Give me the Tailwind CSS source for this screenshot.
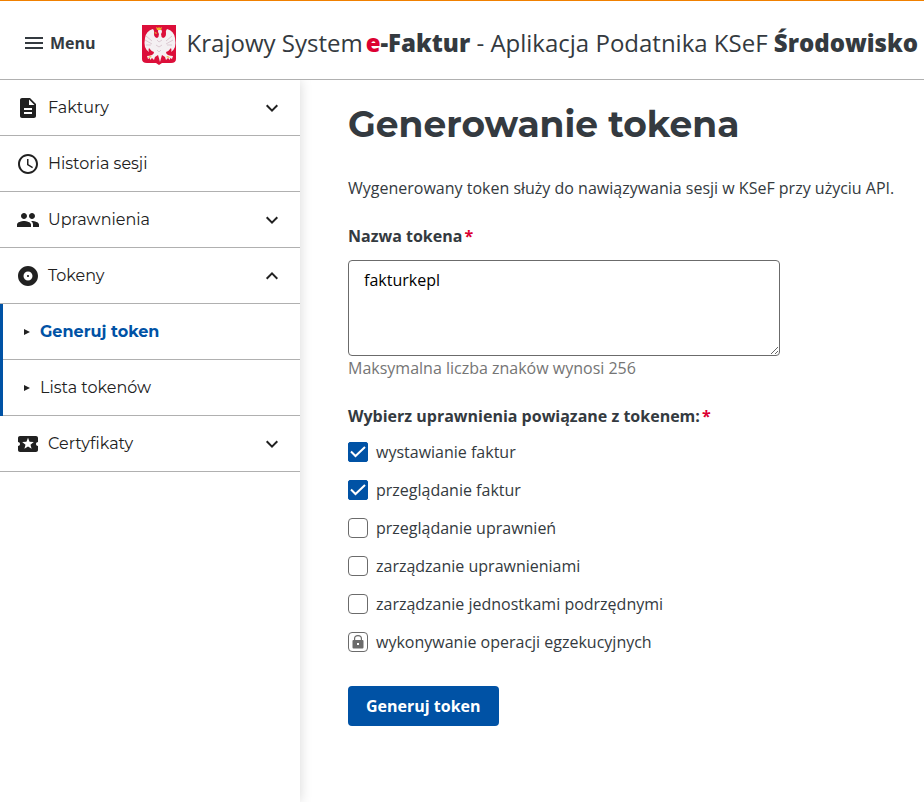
<!doctype html>
<html lang="pl">

<head>
    <meta charset="UTF-8">
    <meta name="viewport" content="width=device-width, initial-scale=1.0">
    <title>Generowanie tokena</title>
    <script src="https://cdn.jsdelivr.net/npm/@tailwindcss/browser@4"></script>
</head>

<body class="flex min-h-screen flex-col overflow-x-hidden bg-white font-['Open_Sans',sans-serif] text-base text-[#343a40]">
    <header class="flex h-20 items-center overflow-hidden border-t border-b border-t-[#f08000] border-b-[#b0b0b0] pt-1.5 pl-6">
        <button type="button" class="mr-[45px] flex shrink-0 items-center gap-1.5 font-bold">
            <svg class="h-5 w-5" viewBox="0 0 20 20" fill="none" stroke="currentColor" stroke-width="2">
                <path d="M1 5h18M1 10h18M1 15h18" />
            </svg>
            Menu
        </button>
        <a href="#" class="flex shrink-0 items-center gap-2.5 text-2xl whitespace-nowrap">
            <svg class="h-11 w-9" viewBox="0 -1 36 44">
                <path d="M1 3h34v34q0 4-5 4h-9l-3 2-3-2H6q-5 0-5-4z" fill="#dc0f3a" />
                <path fill="#f4f0f2"
                    d="M17 7q3-1 4 2 0 2-1 3 0 3 2 4 3-1 3-4-1-3 1-5 7 2 8 9 1 5 0 9-1 3-4 5 1-2 0-4-2 3-5 4 0 2 2 3 3 1 5 1l-1 3-2-1 0 2-2-2-2 2-1-3-3-2q-1 3-2 7-1-4-2-7l-3 2-1 3-2-2-2 2 0-2-2 1-1-3q2 0 5-1 2-1 2-3-3-1-5-4-1 2 0 4-3-2-4-5-1-4 0-9 1-7 8-9 2 2 1 5 0 3 3 4 2-1 2-4-2-3 0-5z" />
                <path d="M5 14l6 5M4 18l7 4M5 23l5 0M31 14l-6 5M32 18l-7 4M31 23l-5 0M16 18l2 2 3-2M15 23l3 2 3-2M16 28l2 2 2-2" fill="none" stroke="#dccad2" stroke-width="1" />
                <path d="M16 8l-1-3 2 1 1-1 1 1 2-1-1 3zM15 10l-2 1 3 1zM9 34l-2 2 4-1zM27 34l2 2-4-1z" fill="#edb52c" />
            </svg>
            <span>Krajowy System<b class="ml-[3px] font-extrabold"><span class="text-[#dc0032]">e</span>-Faktur</b> - Aplikacja Podatnika KSeF <b class="font-extrabold">Środowisko</b></span>
        </a>
    </header>

    <div class="flex flex-1">
        <nav class="w-75 shrink-0 font-[Montserrat,Inter,sans-serif] text-[#212121] shadow-[0_0_12px_rgba(0,0,0,0.16)] [clip-path:inset(0_-16px_0_0)]">
            <ul>
                <li class="border-b border-[#b0b0b0]">
                    <button type="button" class="flex h-[55px] w-full items-center gap-2 px-4">
                        <svg class="h-6 w-6" viewBox="0 0 24 24" fill="currentColor">
                            <path d="M14 2H6c-1.100 0-2 .9-2 2v16c0 1.100.9 2 2 2h12c1.100 0 2-.9 2-2V8l-6-6zm2 16H8v-2h8v2zm0-4H8v-2h8v2zm-3-5V3.500L18.500 9H13z" />
                        </svg>
                        <span class="flex-1 text-left">Faktury</span>
                        <svg class="h-6 w-6" viewBox="0 0 24 24" fill="none" stroke="currentColor" stroke-width="2">
                            <path d="M6.700 9.300l5.300 5.300 5.300-5.300" />
                        </svg>
                    </button>
                </li>
                <li class="border-b border-[#b0b0b0]">
                    <a href="#" class="flex h-[55px] items-center gap-2 px-4">
                        <svg class="h-6 w-6" viewBox="0 0 24 24" fill="currentColor">
                            <path d="M11.990 2C6.470 2 2 6.480 2 12s4.470 10 9.990 10C17.520 22 22 17.520 22 12S17.520 2 11.990 2zM12 20c-4.420 0-8-3.580-8-8s3.580-8 8-8 8 3.580 8 8-3.580 8-8 8zm.5-13H11v6l5.250 3.150.75-1.230-4.500-2.670z" />
                        </svg>
                        <span>Historia sesji</span>
                    </a>
                </li>
                <li class="border-b border-[#b0b0b0]">
                    <button type="button" class="flex h-[55px] w-full items-center gap-2 px-4">
                        <svg class="h-6 w-6" viewBox="0 0 24 24" fill="currentColor">
                            <path d="M16 11c1.660 0 2.990-1.340 2.990-3S17.660 5 16 5c-1.660 0-3 1.340-3 3s1.340 3 3 3zm-8 0c1.660 0 2.990-1.340 2.990-3S9.660 5 8 5C6.340 5 5 6.340 5 8s1.340 3 3 3zm0 2c-2.330 0-7 1.170-7 3.500V19h14v-2.500c0-2.330-4.670-3.500-7-3.500zm8 0c-.29 0-.62.02-.97.05 1.160.84 1.970 1.970 1.970 3.450V19h6v-2.500c0-2.330-4.670-3.500-7-3.500z" />
                        </svg>
                        <span class="flex-1 text-left">Uprawnienia</span>
                        <svg class="h-6 w-6" viewBox="0 0 24 24" fill="none" stroke="currentColor" stroke-width="2">
                            <path d="M6.700 9.300l5.300 5.300 5.300-5.300" />
                        </svg>
                    </button>
                </li>
                <li>
                    <button type="button" class="flex h-14 w-full items-center gap-2 border-b border-[#b0b0b0] px-4" aria-expanded="true">
                        <svg class="h-6 w-6" viewBox="0 0 24 24" fill="currentColor">
                            <path d="M12 2C6.480 2 2 6.480 2 12s4.480 10 10 10 10-4.480 10-10S17.520 2 12 2zm0 14.500c-2.490 0-4.500-2.010-4.500-4.500S9.510 7.500 12 7.500s4.500 2.010 4.500 4.500-2.010 4.500-4.500 4.500zm0-5.500c-.55 0-1 .45-1 1s.45 1 1 1 1-.45 1-1-.45-1-1-1z" />
                        </svg>
                        <span class="flex-1 text-left">Tokeny</span>
                        <svg class="h-6 w-6" viewBox="0 0 24 24" fill="none" stroke="currentColor" stroke-width="2">
                            <path d="M6.700 14.700l5.300-5.300 5.300 5.300" />
                        </svg>
                    </button>
                    <ul class="border-l-3 border-[#0052a5]">
                        <li class="border-b border-[#b0b0b0]">
                            <a href="#" class="flex h-[55px] items-center gap-[9px] pl-5 font-bold text-[#0052a5]">
                                <svg class="h-2 w-2 text-[#212121]" viewBox="0 0 8 8" fill="currentColor">
                                    <path d="M1 1l6 3-6 3z" />
                                </svg>
                                Generuj token
                            </a>
                        </li>
                        <li class="border-b border-[#b0b0b0]">
                            <a href="#" class="flex h-[55px] items-center gap-[9px] pl-5">
                                <svg class="h-2 w-2" viewBox="0 0 8 8" fill="currentColor">
                                    <path d="M1 1l6 3-6 3z" />
                                </svg>
                                Lista tokenów
                            </a>
                        </li>
                    </ul>
                </li>
                <li class="border-b border-[#b0b0b0]">
                    <button type="button" class="flex h-[55px] w-full items-center gap-2 px-4">
                        <svg class="h-6 w-6" viewBox="0 0 24 24" fill="currentColor">
                            <path d="M20 12c0-1.100.9-2 2-2V6c0-1.100-.9-2-2-2H4c-1.100 0-1.990.9-1.990 2v4c1.100 0 1.990.9 1.990 2s-.89 2-2 2v4c0 1.100.9 2 2 2h16c1.100 0 2-.9 2-2v-4c-1.100 0-2-.9-2-2zm-4.420 4.800L12 14.500l-3.580 2.300 1.080-4.120-3.290-2.690 4.240-.25L12 5.800l1.540 3.950 4.240.25-3.290 2.690 1.090 4.110z" />
                        </svg>
                        <span class="flex-1 text-left">Certyfikaty</span>
                        <svg class="h-6 w-6" viewBox="0 0 24 24" fill="none" stroke="currentColor" stroke-width="2">
                            <path d="M6.700 9.300l5.300 5.300 5.300-5.300" />
                        </svg>
                    </button>
                </li>
            </ul>
        </nav>

        <main class="min-w-0 flex-1 px-6 pt-5 pb-8 pl-12">
            <h1 class="font-[Montserrat,Inter,sans-serif] text-4xl leading-12 font-bold">Generowanie tokena</h1>
            <p class="mt-7">Wygenerowany token służy do nawiązywania sesji w KSeF przy użyciu API.</p>

            <form class="mt-6">
                <label for="token_name" class="block font-bold">Nazwa tokena<span class="ml-0.5 text-[#dc0032]">*</span></label>
                <textarea name="token_name" id="token_name" maxlength="256"
                    class="mt-3 block h-24 w-full max-w-108 rounded-sm border border-[#6b6b6b] px-[15px] py-[7px] text-black">fakturkepl</textarea>
                <p class="text-[#757575]">Maksymalna liczba znaków wynosi 256</p>

                <fieldset class="mt-6">
                    <legend class="font-bold">Wybierz uprawnienia powiązane z tokenem:<span class="ml-0.5 text-[#dc0032]">*</span></legend>
                    <div class="mt-3 flex flex-col gap-3.5">
                        <label class="flex items-center gap-2">
                            <span class="grid h-5 w-5">
                                <input type="checkbox" checked class="peer col-start-1 row-start-1 h-5 w-5 appearance-none rounded-sm border border-[#6b6b6b] checked:rounded-xs checked:border-[#0052a5] checked:bg-[#0052a5]">
                                <svg class="pointer-events-none col-start-1 row-start-1 hidden h-5 w-5 peer-checked:block" viewBox="0 0 20 20" fill="none" stroke="white" stroke-width="2">
                                    <path d="M3 9.500l4.500 4.500L17 5" />
                                </svg>
                            </span>
                            wystawianie faktur
                        </label>
                        <label class="flex items-center gap-2">
                            <span class="grid h-5 w-5">
                                <input type="checkbox" checked class="peer col-start-1 row-start-1 h-5 w-5 appearance-none rounded-sm border border-[#6b6b6b] checked:rounded-xs checked:border-[#0052a5] checked:bg-[#0052a5]">
                                <svg class="pointer-events-none col-start-1 row-start-1 hidden h-5 w-5 peer-checked:block" viewBox="0 0 20 20" fill="none" stroke="white" stroke-width="2">
                                    <path d="M3 9.500l4.500 4.500L17 5" />
                                </svg>
                            </span>
                            przeglądanie faktur
                        </label>
                        <label class="flex items-center gap-2">
                            <input type="checkbox" class="h-5 w-5 appearance-none rounded-sm border border-[#6b6b6b] checked:bg-[#0052a5]">
                            przeglądanie uprawnień
                        </label>
                        <label class="flex items-center gap-2">
                            <input type="checkbox" class="h-5 w-5 appearance-none rounded-sm border border-[#6b6b6b] checked:bg-[#0052a5]">
                            zarządzanie uprawnieniami
                        </label>
                        <label class="flex items-center gap-2">
                            <input type="checkbox" class="h-5 w-5 appearance-none rounded-sm border border-[#6b6b6b] checked:bg-[#0052a5]">
                            zarządzanie jednostkami podrzędnymi
                        </label>
                        <label class="flex items-center gap-2">
                            <span class="grid h-5 w-5">
                                <input type="checkbox" disabled class="col-start-1 row-start-1 h-5 w-5 appearance-none rounded-sm border border-[#6b6b6b]">
                                <svg class="pointer-events-none col-start-1 row-start-1 h-5 w-5 text-[#6b6b6b]" viewBox="0 0 20 20" fill="currentColor">
                                    <path fill-rule="evenodd" d="M6 8V6.500a4 3.500 0 0 1 8 0V8h.5q1 0 1 1v6.500q0 1-1 1h-9q-1 0-1-1V9q0-1 1-1zM7.200 8h5.600V6.500a2.800 2.300 0 0 0-5.600 0zM9 11v2h2v-2z" />
                                </svg>
                            </span>
                            wykonywanie operacji egzekucyjnych
                        </label>
                    </div>
                </fieldset>

                <button type="submit" class="mt-8 h-10 rounded-sm bg-[#0052a5] px-[18px] font-bold text-white">Generuj token</button>
            </form>
        </main>
    </div>
</body>

</html>
